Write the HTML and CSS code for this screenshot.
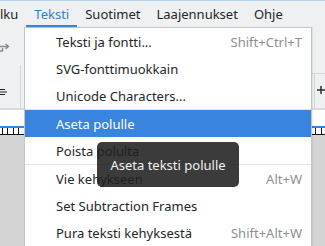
FILE: index.html
```html
<!DOCTYPE html>
<html lang="fi">
<head>
    <meta charset="UTF-8">
    <meta name="viewport" content="width=device-width, initial-scale=1.0">
    <title>Teksti</title>
    <link rel="stylesheet" href="styles.css">
</head>
<body>
    <div class="window">
        <div class="topline"></div>
        <nav class="menubar">
            <span class="menu-title first">lku</span>
            <span class="menu-title active">Teksti</span>
            <span class="menu-title">Suotimet</span>
            <span class="menu-title">Laajennukset</span>
            <span class="menu-title">Ohje</span>
        </nav>
        <div class="toolbar">
            <div class="tb-left">
                <div class="tb-row1">
                    <svg class="icon" width="11" height="10" viewBox="0 0 11 10">
                        <path d="M1 3.5 H9 M6.5 1 L9.5 3.5 L6.5 6" fill="none" stroke="#8a8a8a" stroke-width="1.4"/>
                        <path d="M3.5 5 V8 H0" fill="none" stroke="#8a8a8a" stroke-width="1.4"/>
                    </svg>
                </div>
                <div class="tb-row2">
                    <svg class="icon" width="7" height="8" viewBox="0 0 7 8">
                        <path d="M0 1.5 H5 M0 4 H7 M0 6.5 H5" fill="none" stroke="#1e1e1e" stroke-width="1.2"/>
                    </svg>
                </div>
            </div>
            <div class="tb-mid"></div>
            <div class="tb-right">
                <div class="r-top"></div>
                <div class="r-bot">
                    <span class="dot"></span>
                    <div class="r-group">
                        <svg class="icon" width="8" height="8" viewBox="0 0 8 8">
                            <path d="M4 0 V8 M0 4 H8" fill="none" stroke="#2b2b2b" stroke-width="1.5"/>
                        </svg>
                    </div>
                </div>
            </div>
        </div>
        <div class="toolsep"></div>
        <div class="ruler">
            <div class="ruler-line"></div>
            <div class="ruler-ticks"></div>
        </div>
        <div class="canvas"></div>
    </div>

    <div class="dropdown">
        <div class="item"><span>Teksti ja fontti...</span><span class="shortcut">Shift+Ctrl+T</span></div>
        <div class="item"><span>SVG-fonttimuokkain</span></div>
        <div class="item"><span>Unicode Characters...</span></div>
        <div class="separator"></div>
        <div class="item selected"><span>Aseta polulle</span></div>
        <div class="item"><span>Poista polulta</span></div>
        <div class="separator"></div>
        <div class="item"><span>Vie kehykseen</span><span class="shortcut">Alt+W</span></div>
        <div class="item"><span>Set Subtraction Frames</span></div>
        <div class="item"><span>Pura teksti kehyksestä</span><span class="shortcut">Shift+Alt+W</span></div>
    </div>

    <div class="tooltip">Aseta teksti polulle</div>
</body>
</html>
```

FILE: styles.css
```css
body, html {
    margin: 0;
    padding: 0;
    font-family: 'Noto Sans', 'DejaVu Sans', sans-serif;
    font-size: 13px;
    color: #232627;
    width: 325px;
    height: 246px;
    overflow: hidden;
}

.window {
    display: flex;
    flex-direction: column;
    height: 246px;
    background-color: #eff0f1;
}

.topline {
    height: 1px;
    background-color: #b6d3ef;
}

/* menubar */
.menubar {
    display: flex;
    height: 26px;
    background-color: #eff0f1;
    margin-left: -8px;
}

.menu-title {
    display: flex;
    align-items: center;
    padding: 0 8px;
    box-sizing: border-box;
    border-bottom: 2px solid transparent;
    padding-top: 2px;
    white-space: nowrap;
}

.menu-title.active {
    color: #2f7fd6;
    border-bottom-color: #3584e4;
}

/* toolbar behind the menu */
.toolbar {
    display: flex;
    height: 81px;
}

.tb-left {
    width: 21px;
    display: flex;
    flex-direction: column;
}

.tb-row1 {
    height: 38px;
    box-sizing: border-box;
    padding-top: 16px;
    margin-left: -1px;
}

.tb-row2 {
    flex: 1;
    box-sizing: border-box;
    border-right: 1px solid #d4d5d6;
    padding-top: 23px;
    margin-bottom: 1px;
}

.icon {
    display: block;
}

.tb-mid {
    flex: 1;
}

.tb-right {
    width: 13px;
    display: flex;
    flex-direction: column;
}

.r-top {
    height: 46px;
    border-bottom: 1px solid #d4d5d6;
}

.r-bot {
    flex: 1;
    display: flex;
}

.dot {
    width: 2px;
    height: 2px;
    margin-top: 16px;
    margin-left: 1px;
    background-color: #444;
}

.r-group {
    margin-left: 1px;
    padding-left: 2px;
    padding-top: 12px;
    border-left: 1px solid #d4d5d6;
}

.toolsep {
    height: 2px;
    background-color: #d9dadb;
}

/* ruler */
.ruler {
    height: 25px;
    background-color: #fff;
    display: flex;
    flex-direction: column;
    justify-content: flex-end;
}

.ruler-line {
    height: 2px;
    background-color: #3584e4;
}

.ruler-ticks {
    height: 7px;
    box-sizing: border-box;
    border-bottom: 1px solid #111;
    background-image: repeating-linear-gradient(90deg, transparent 0, transparent 1.6px, #111 1.6px, #111 2.6px, transparent 2.6px, transparent 5.6px);
}

.canvas {
    flex: 1;
    background-color: #d4d4d4;
}

/* dropdown menu */
.dropdown {
    position: absolute;
    left: 24px;
    top: 27px;
    width: 288px;
    box-sizing: border-box;
    background-color: #fff;
    border: 1px solid #c4c5c6;
    box-shadow: 1px 0 1px rgba(0, 0, 0, 0.06);
}

.item {
    display: flex;
    justify-content: space-between;
    align-items: center;
    height: 27px;
    padding: 0 9px 0 31px;
    white-space: nowrap;
}

.item.selected {
    background-color: #3884de;
    color: #fff;
}

.shortcut {
    color: #8d8f91;
}

.separator {
    height: 1px;
    background-color: #e3e4e5;
}

/* tooltip */
.tooltip {
    position: absolute;
    left: 97px;
    top: 142px;
    width: 142px;
    height: 45px;
    border-radius: 5px;
    background-color: rgba(32, 32, 32, 0.88);
    color: #f2f2f2;
    display: flex;
    align-items: center;
    justify-content: center;
}
```
